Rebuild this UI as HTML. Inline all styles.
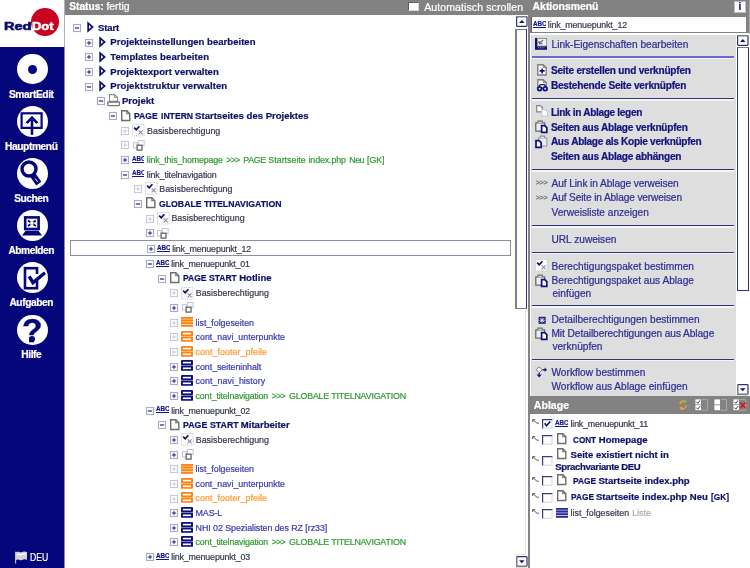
<!DOCTYPE html>
<html lang="de"><head><meta charset="utf-8"><title>RedDot CMS</title>
<style>
html,body{margin:0;padding:0;}
body{width:750px;height:568px;position:relative;overflow:hidden;background:#fff;will-change:transform;font-family:"Liberation Sans",Arial,sans-serif;}
.b{position:absolute;}
.t{position:absolute;white-space:nowrap;line-height:12px;height:12px;-webkit-text-stroke:0.22px currentColor;}
.i{position:absolute;overflow:visible;}
.abc{position:absolute;width:12.9px;height:7.1px;overflow:hidden;font-size:7.9px;line-height:7px;font-weight:bold;color:#14148a;border-bottom:1.2px solid #14148a;white-space:nowrap;}
.abc span{display:inline-block;transform:scaleX(0.8);transform-origin:0 50%;-webkit-text-stroke:0.2px #14148a;}
.circ{position:absolute;border-radius:50%;background:#fff;}
</style></head><body>


<svg width="0" height="0" style="position:absolute">
<defs>
<g id="plus"><rect x="0.5" y="0.5" width="7" height="7" fill="#fff" stroke="#acacca" stroke-width="1.1"/><path d="M1.9 4H6.1M4 1.9V6.1" stroke="#10106a" stroke-width="0.9"/></g>
<g id="minus"><rect x="0.5" y="0.5" width="7" height="7" fill="#fff" stroke="#acacca" stroke-width="1.1"/><path d="M1.9 4H6.1" stroke="#10106a" stroke-width="1.1"/></g>
<g id="plusd"><rect x="0.5" y="0.5" width="7" height="7" fill="#fff" stroke="#c6c6d8" stroke-width="1.1"/><path d="M1.7 4H6.3M4 1.7V6.3" stroke="#c8c8d8" stroke-width="0.9"/></g>
<g id="arrow"><path d="M1.15 1.2L5.6 5L1.15 8.8Z" fill="#fff" stroke="#10106a" stroke-width="1.7" stroke-linejoin="miter"/></g>
<g id="page"><path d="M0.7 0.7H5.8L8.8 3.7V10.5H0.7Z" fill="#fff" stroke="#6c6c6c" stroke-width="1.4"/><path d="M5.8 0.7V3.7H8.8" fill="none" stroke="#6c6c6c" stroke-width="1.1"/></g>
<g id="projekt"><path d="M2.5 0.6H7.5L10.5 3.4V7.4H2.5Z" fill="#fff" stroke="#8a8a8a" stroke-width="1.1"/><path d="M7.5 0.6V3.4H10.5" fill="none" stroke="#8a8a8a" stroke-width="0.9"/><rect x="0.7" y="8" width="11.8" height="3.6" rx="0.8" fill="#fff" stroke="#777" stroke-width="1.3"/></g>
<g id="check"><rect x="0.5" y="0.5" width="11.5" height="11.5" fill="#fff" stroke="#c4c4d4" stroke-width="0.9" stroke-dasharray="1.2 0.8"/><path d="M2.2 3.6L4.2 5.8L7.4 2.2" fill="none" stroke="#10106a" stroke-width="1.7"/><path d="M6.6 6.4L10.6 10.4M10.6 6.4L6.6 10.4" stroke="#8c8c9c" stroke-width="1.1"/></g>
<g id="squares"><rect x="0.5" y="2.7" width="3.9" height="5.3" fill="#fff" stroke="#c2c2d8" stroke-width="1"/><rect x="5.3" y="0.5" width="5.8" height="5.2" fill="#fff" stroke="#c2c2d8" stroke-width="1"/><rect x="4.1" y="5.2" width="4.9" height="4.9" fill="#fff" stroke="#646464" stroke-width="1.3"/></g>
<g id="listo"><rect x="0" y="0.4" width="12" height="9" fill="#ffd2a4"/><path d="M0 0.9H12M0 3.5H12M0 6.1H12M0 8.8H12" stroke="#ff8212" stroke-width="1.8"/></g>
<g id="listn"><rect x="0" y="0.4" width="12" height="9" fill="#c4c4e4"/><path d="M0 0.9H12M0 3.5H12M0 6.1H12M0 8.8H12" stroke="#2a2a9c" stroke-width="1.8"/></g>
<g id="conto"><rect x="0" y="4" width="12" height="2.6" fill="#ffc48c"/><rect x="0" y="0" width="12" height="5" rx="0.9" fill="#ff8212"/><rect x="1.9" y="1.8" width="8.1" height="1.6" fill="#fff"/><rect x="0" y="5.7" width="12" height="5.1" rx="0.9" fill="#ff8212"/><rect x="1.9" y="7.5" width="8.1" height="1.6" fill="#fff"/></g>
<g id="contn"><rect x="0" y="4" width="12" height="2.6" fill="#9c9cc8"/><rect x="0" y="0" width="12" height="5" rx="0.9" fill="#10107c"/><rect x="1.9" y="1.8" width="8.1" height="1.6" fill="#fff"/><rect x="0" y="5.7" width="12" height="5.1" rx="0.9" fill="#10107c"/><rect x="1.9" y="7.5" width="8.1" height="1.6" fill="#fff"/></g>
<g id="sbup"><rect x="0.6" y="0.6" width="10.4" height="9.8" rx="0.8" fill="#fff" stroke="#30307c" stroke-width="1.2"/><path d="M0.4 0.6H11.2" stroke="#808080" stroke-width="1.3"/><path d="M3.1 7L5.8 3.9L8.5 7Z" fill="#10106a"/></g>
<g id="sbdn"><rect x="0.6" y="0.6" width="10.4" height="9.8" rx="0.8" fill="#fff" stroke="#30307c" stroke-width="1.2"/><path d="M0.7 0.4V10.5H11" fill="none" stroke="#808080" stroke-width="1.4"/><path d="M3.1 4.2L5.8 7.3L8.5 4.2Z" fill="#10106a"/></g>
<g id="clip"><path d="M0.8 2.8H9.6V11.2H0.8Z" fill="#f0f0f0" stroke="#666" stroke-width="1.3" stroke-linejoin="round"/><path d="M3 2.8V1.1H7.2V2.8" fill="#f0f0f0" stroke="#666" stroke-width="1.1"/><path d="M6.6 5.6H9.8L11.8 7.6V12.4H6.6Z" fill="#fff" stroke="#10107c" stroke-width="1.7"/></g>
<g id="clip2"><path d="M3.4 2.8H11.8V11.2H3.4Z" fill="#ececec" stroke="#a4a4a4" stroke-width="1.2" stroke-linejoin="round"/><path d="M5.4 2.8V1.1H9.6V2.8" fill="#f4f4f4" stroke="#8a8a8a" stroke-width="1.1"/><path d="M1 5.6H4.2L6.2 7.6V12.4H1Z" fill="#fff" stroke="#10107c" stroke-width="1.7"/></g>
<g id="copy"><path d="M0.7 0.7H4.4L6.4 2.6V6.8H0.7Z" fill="#fff" stroke="#858585" stroke-width="1.2"/><path d="M5.8 4.8H9.6L11.6 6.6V11H5.8Z" fill="#fff" stroke="#c6c6dc" stroke-width="1.1"/></g>
<g id="linkprop"><rect x="0" y="0" width="12" height="11.8" fill="#10107c"/><rect x="2.5" y="0.6" width="9" height="7.4" fill="#f2f2f2" stroke="#9a9a9a" stroke-width="0.9"/><path d="M4 5.6L8 2.2M4 5.6H7.4M4 5.6V3" stroke="#666" stroke-width="1.3" fill="none"/><path d="M3 9.8H10" stroke="#c8c8e8" stroke-width="0.8" stroke-dasharray="1 0.8"/></g>
<g id="newpage"><path d="M0.8 0.8H6.2L9.2 3.6V11H0.8Z" fill="#fff" stroke="#808080" stroke-width="1.4"/><path d="M6.2 0.8V3.6H9.2" fill="none" stroke="#808080" stroke-width="1"/><path d="M2.6 6.9H7.6M5.1 4.4V9.4" stroke="#10107c" stroke-width="1.6"/></g>
<g id="bino"><path d="M0.8 0.8H6.2L9.2 3.6V9H0.8Z" fill="#fff" stroke="#808080" stroke-width="1.4"/><path d="M6.2 0.8V3.6H9.2" fill="none" stroke="#808080" stroke-width="1"/><path d="M2 7.4L3.4 5.6H7.2L8.8 7.4" fill="none" stroke="#10107c" stroke-width="1.3"/><circle cx="2.6" cy="9.8" r="1.9" fill="#dcdcf0" stroke="#10107c" stroke-width="1.7"/><circle cx="8.2" cy="9.8" r="1.9" fill="#dcdcf0" stroke="#10107c" stroke-width="1.7"/></g>
<g id="detail"><rect x="0.5" y="0.5" width="6" height="6" fill="none" stroke="#d0d0dc" stroke-width="0.8" stroke-dasharray="1 1"/><rect x="3.6" y="3.8" width="7" height="7" fill="#10107c"/><path d="M5 5.2L9.2 9.4M9.2 5.2L5 9.4" stroke="#fff" stroke-width="1"/><path d="M7.1 4.4V10.2M4.2 7.3H10" stroke="#fff" stroke-width="0.7"/></g>
<g id="workflow"><path d="M4.2 0.8L7.2 3.8L4.2 6.8L1.2 3.8Z" fill="#fff" stroke="#777" stroke-width="1"/><path d="M7.6 3.8H10" stroke="#10107c" stroke-width="1.4"/><path d="M9.6 1.6L12 3.8L9.6 6Z" fill="#10107c"/><path d="M4.2 7V8.6" stroke="#10107c" stroke-width="1.4"/><path d="M1.6 8.4H6.8L4.2 11.4Z" fill="#10107c"/></g>
<g id="ablarrow"><path d="M1 1L5 4.2H7" fill="none" stroke="#555" stroke-width="0.9"/><path d="M0.6 0.6H3.2M0.6 0.6V3" stroke="#555" stroke-width="0.9" fill="none"/></g>
<g id="cb"><rect x="0" y="0" width="10.4" height="9.6" fill="#fff"/><path d="M0.6 9.6V0.6H10.4" fill="none" stroke="#3c3c74" stroke-width="1.2"/><path d="M10 1V9.2H1" fill="none" stroke="#d4d4d4" stroke-width="1"/></g>
<g id="cbc"><rect x="0" y="0" width="10.4" height="9.6" fill="#fff"/><path d="M0.6 9.6V0.6H10.4" fill="none" stroke="#3c3c74" stroke-width="1.2"/><path d="M10 1V9.2H1" fill="none" stroke="#d4d4d4" stroke-width="1"/><path d="M2.6 4.2L4.6 6.8L8.2 2.4" fill="none" stroke="#10106a" stroke-width="1.6"/></g>
</defs>
</svg>

<div class="b" style="left:0;top:0;width:63.6px;height:47px;background:#fff"></div>
<div class="b" style="left:0;top:47px;width:64.2px;height:521px;background:#05057c"></div>
<div class="b" style="left:63.5px;top:0;width:1.2px;height:47px;background:#b0b0c4"></div>
<div class="b" style="left:64.2px;top:47px;width:1.1px;height:521px;background:#8c8c8c"></div>
<div class="b" style="left:64.7px;top:0;width:686px;height:15.3px;background:#828282"></div>
<div class="b" style="left:30.8px;top:7.5px;width:28.4px;height:28.6px;border-radius:50%;background:#c9021f"></div>
<span class="t" style="left:3.6px;top:20.6px;font-size:10.2px;font-weight:bold;color:#0a0a6e;-webkit-text-stroke:0.55px #0a0a6e;transform-origin:0 50%;transform:scaleX(1.44);letter-spacing:-0.1px">Red</span>
<span class="t" style="left:32.3px;top:20.6px;font-size:10.2px;font-weight:bold;color:#fff;-webkit-text-stroke:0.5px #fff;transform-origin:0 50%;transform:scaleX(1.28);letter-spacing:-0.1px">Dot</span>
<div class="circ" style="left:16.75px;top:53.55px;width:30.90px;height:30.90px"></div>
<span class="t" style="left:8.90px;top:88.87px;font-size:10.2px;color:#fff;font-weight:bold;letter-spacing:-0.374px;">SmartEdit</span>
<div class="circ" style="left:27.60px;top:64.90px;width:9.2px;height:9.2px;background:#05057c"></div>
<div class="circ" style="left:16.75px;top:106.05px;width:30.90px;height:30.90px"></div>
<span class="t" style="left:5.00px;top:141.07px;font-size:10.2px;color:#fff;font-weight:bold;letter-spacing:-0.388px;">Hauptmenü</span>
<svg class="i" style="left:16.200000000000003px;top:105.5px" width="32" height="32"><rect x="5.6" y="7.3" width="20" height="14.6" fill="none" stroke="#05057c" stroke-width="2.2"/><path d="M16 28.8V14" stroke="#05057c" stroke-width="2.6"/><path d="M10.6 17.2L16 11.6L21.4 17.2" fill="none" stroke="#05057c" stroke-width="2.6"/></svg>
<div class="circ" style="left:16.75px;top:157.95px;width:30.90px;height:30.90px"></div>
<span class="t" style="left:14.20px;top:193.27px;font-size:10.2px;color:#fff;font-weight:bold;letter-spacing:-0.444px;">Suchen</span>
<svg class="i" style="left:16.200000000000003px;top:157.4px" width="32" height="32"><circle cx="13" cy="12" r="7" fill="none" stroke="#05057c" stroke-width="3.4"/><path d="M17 18.4L22.8 26.6" stroke="#05057c" stroke-width="6.2"/><path d="M19.3 21.6L21.6 24.8" stroke="#fff" stroke-width="1"/></svg>
<div class="circ" style="left:16.75px;top:210.05px;width:30.90px;height:30.90px"></div>
<span class="t" style="left:8.45px;top:245.37px;font-size:10.2px;color:#fff;font-weight:bold;letter-spacing:-0.454px;">Abmelden</span>
<svg class="i" style="left:16.200000000000003px;top:209.5px" width="32" height="32"><rect x="9.2" y="7.4" width="13.4" height="11.6" fill="#fff" stroke="#05057c" stroke-width="2.6"/><path d="M12 10.4L19.8 16M19.8 10.4L12 16" stroke="#05057c" stroke-width="1.8"/><rect x="14.2" y="11.7" width="3.4" height="3" fill="#fff"/><path d="M9.6 20.8H22.4L26 25.4H6Z" fill="#05057c"/></svg>
<div class="circ" style="left:16.75px;top:262.15px;width:30.90px;height:30.90px"></div>
<span class="t" style="left:9.40px;top:297.27px;font-size:10.2px;color:#fff;font-weight:bold;letter-spacing:-0.404px;">Aufgaben</span>
<svg class="i" style="left:16.200000000000003px;top:261.6px" width="32" height="32"><rect x="9" y="6.2" width="12" height="20" fill="#fff" stroke="#05057c" stroke-width="2.6"/><rect x="19" y="12" width="5" height="6" fill="#fff"/><path d="M13.2 14.4L17 20.6L29 10.8" fill="none" stroke="#05057c" stroke-width="3.4"/></svg>
<div class="circ" style="left:16.75px;top:314.55px;width:30.90px;height:30.90px"></div>
<span class="t" style="left:21.25px;top:349.07px;font-size:10.2px;color:#fff;font-weight:bold;letter-spacing:-0.401px;">Hilfe</span>
<span class="t" style="left:0;width:64.6px;text-align:center;top:313.50px;height:34px;line-height:34px;font-size:33.5px;font-weight:bold;color:#05057c;-webkit-text-stroke:0.35px #05057c">?</span>
<div class="circ" style="left:28.70px;top:335.90px;width:6.4px;height:6.4px;background:#05057c"></div>
<svg class="i" style="left:14.6px;top:551.2px" width="13" height="13"><path d="M0.6 0.8V12.4" stroke="#c8c8c8" stroke-width="1.1"/><path d="M1 1.2C3.5 -0.4 5 2.4 7.5 0.9C9 0.1 10.5 0.5 12 1.1V8.8C10 8 8.8 8 7.5 8.8C5 10.2 3.5 7.2 1 9Z" fill="#d4d4d4"/><path d="M2.5 3.6C4 2.6 5.2 4.4 7.4 3.2C8.6 2.6 9.6 2.8 10.6 3.2" fill="none" stroke="#fff" stroke-width="1.3"/></svg>
<span class="t" style="left:29.80px;top:552.40px;font-size:10.4px;color:#fff;"><span style="display:inline-block;white-space:pre;transform:scaleX(0.8288);transform-origin:0 50%;margin-right:-3.76px">DEU</span></span>
<span class="t" style="left:69.20px;top:1.47px;font-size:10.2px;color:#fff;font-weight:bold;">Status:</span>
<span class="t" style="left:106.40px;top:1.40px;font-size:10.4px;color:#fff;">fertig</span>
<div class="b" style="left:408.4px;top:1.9px;width:10.2px;height:9.4px;background:#fff;box-sizing:border-box;border-top:1px solid #5e5e5e;border-left:1px solid #5e5e5e;border-right:1px solid #d8d8d8;border-bottom:1px solid #d8d8d8"></div>
<span class="t" style="left:424.20px;top:1.33px;font-size:10.6px;color:#fff;letter-spacing:0.062px;">Automatisch scrollen</span>
<span class="t" style="left:532.60px;top:1.40px;font-size:10.4px;color:#fff;font-weight:bold;">Aktionsmenü</span>
<div class="b" style="left:734.1px;top:1.2px;width:11.8px;height:11.4px;background:#fff;box-sizing:border-box;border:1.3px solid #bcbccc"></div>
<span class="t" style="left:738.50px;top:1.33px;font-size:10px;color:#10107c;font-weight:bold;">i</span>
<div class="b" style="left:70.4px;top:239.9px;width:440.4px;height:16.2px;box-sizing:border-box;border:1.1px solid #8e8e9e;background:#fff"></div>
<svg class="i" style="left:72.75px;top:24.10px" width="8" height="8"><use href="#minus"/></svg>
<svg class="i" style="left:86.70px;top:22.40px" width="8" height="10"><use href="#arrow"/></svg>
<span class="t" style="left:98.10px;top:21.79px;font-size:9.55px;color:#10106a;font-weight:bold;letter-spacing:-0.191px;">Start</span>
<svg class="i" style="left:84.92px;top:38.75px" width="8" height="8"><use href="#plus"/></svg>
<svg class="i" style="left:98.87px;top:37.05px" width="8" height="10"><use href="#arrow"/></svg>
<span class="t" style="left:110.27px;top:36.44px;font-size:9.55px;color:#10106a;font-weight:bold;letter-spacing:0.014px;">Projekteinstellungen bearbeiten</span>
<svg class="i" style="left:84.92px;top:53.40px" width="8" height="8"><use href="#plus"/></svg>
<svg class="i" style="left:98.87px;top:51.70px" width="8" height="10"><use href="#arrow"/></svg>
<span class="t" style="left:110.27px;top:51.09px;font-size:9.55px;color:#10106a;font-weight:bold;letter-spacing:0.068px;">Templates bearbeiten</span>
<svg class="i" style="left:84.92px;top:68.05px" width="8" height="8"><use href="#plus"/></svg>
<svg class="i" style="left:98.87px;top:66.35px" width="8" height="10"><use href="#arrow"/></svg>
<span class="t" style="left:110.27px;top:65.74px;font-size:9.55px;color:#10106a;font-weight:bold;letter-spacing:0.010px;">Projektexport verwalten</span>
<svg class="i" style="left:84.92px;top:82.70px" width="8" height="8"><use href="#minus"/></svg>
<svg class="i" style="left:98.87px;top:81.00px" width="8" height="10"><use href="#arrow"/></svg>
<span class="t" style="left:110.27px;top:80.39px;font-size:9.55px;color:#10106a;font-weight:bold;letter-spacing:0.071px;">Projektstruktur verwalten</span>
<svg class="i" style="left:97.08px;top:97.35px" width="8" height="8"><use href="#minus"/></svg>
<svg class="i" style="left:107.23px;top:94.25px" width="13" height="12"><use href="#projekt"/></svg>
<span class="t" style="left:122.03px;top:95.04px;font-size:9.55px;color:#10106a;font-weight:bold;letter-spacing:-0.027px;">Projekt</span>
<svg class="i" style="left:109.24px;top:112.00px" width="8" height="8"><use href="#minus"/></svg>
<svg class="i" style="left:121.19px;top:109.50px" width="10" height="11.5"><use href="#page"/></svg>
<span class="t" style="left:134.39px;top:109.69px;font-size:9.55px;color:#10106a;font-weight:bold;"><span style="display:inline-block;white-space:pre;transform:scaleX(0.9031);transform-origin:0 50%;margin-right:-2.81px">PAGE </span><span style="display:inline-block;white-space:pre;transform:scaleX(0.9031);transform-origin:0 50%;margin-right:-3.70px">INTERN </span>Startseites des Projektes</span>
<svg class="i" style="left:121.41px;top:126.65px" width="8" height="8"><use href="#plusd"/></svg>
<svg class="i" style="left:132.36px;top:123.75px" width="12.5" height="12.5"><use href="#check"/></svg>
<span class="t" style="left:147.06px;top:124.58px;font-size:8.85px;color:#3a3a52;letter-spacing:0.029px;">Basisberechtigung</span>
<svg class="i" style="left:121.41px;top:141.30px" width="8" height="8"><use href="#plusd"/></svg>
<svg class="i" style="left:132.86px;top:139.60px" width="12" height="11"><use href="#squares"/></svg>
<svg class="i" style="left:121.41px;top:155.95px" width="8" height="8"><use href="#plus"/></svg>
<span class="abc" style="left:131.56px;top:154.70px"><span>ABC</span></span>
<span class="t" style="left:146.86px;top:153.88px;font-size:8.85px;color:#309c30;letter-spacing:-0.150px;">link_this_homepage</span>
<span class="t" style="left:226.36px;top:153.88px;font-size:8.85px;color:#309c30;letter-spacing:-0.802px;">&gt;&gt;&gt;</span>
<span class="t" style="left:243.26px;top:153.88px;font-size:8.85px;color:#309c30;letter-spacing:-0.353px;">PAGE</span>
<span class="t" style="left:268.36px;top:153.88px;font-size:8.85px;color:#309c30;letter-spacing:0.002px;">Startseite</span>
<span class="t" style="left:308.46px;top:153.88px;font-size:8.85px;color:#309c30;letter-spacing:-0.104px;">index.php</span>
<span class="t" style="left:349.36px;top:153.88px;font-size:8.85px;color:#309c30;letter-spacing:-0.614px;">Neu</span>
<span class="t" style="left:367.06px;top:153.88px;font-size:8.85px;color:#309c30;letter-spacing:-0.087px;">[GK]</span>
<svg class="i" style="left:121.41px;top:170.60px" width="8" height="8"><use href="#minus"/></svg>
<span class="abc" style="left:131.56px;top:169.35px"><span>ABC</span></span>
<span class="t" style="left:146.86px;top:168.53px;font-size:8.85px;color:#3a3a52;letter-spacing:-0.124px;">link_titelnavigation</span>
<svg class="i" style="left:133.57px;top:185.25px" width="8" height="8"><use href="#plusd"/></svg>
<svg class="i" style="left:144.53px;top:182.35px" width="12.5" height="12.5"><use href="#check"/></svg>
<span class="t" style="left:159.22px;top:183.18px;font-size:8.85px;color:#3a3a52;letter-spacing:0.029px;">Basisberechtigung</span>
<svg class="i" style="left:133.57px;top:199.90px" width="8" height="8"><use href="#minus"/></svg>
<svg class="i" style="left:145.53px;top:197.40px" width="10" height="11.5"><use href="#page"/></svg>
<span class="t" style="left:158.72px;top:197.59px;font-size:9.55px;color:#10106a;font-weight:bold;"><span style="display:inline-block;white-space:pre;transform:scaleX(0.9122);transform-origin:0 50%;margin-right:-4.33px">GLOBALE </span><span style="display:inline-block;white-space:pre;transform:scaleX(0.9122);transform-origin:0 50%;margin-right:-7.47px">TITELNAVIGATION</span></span>
<svg class="i" style="left:145.74px;top:214.55px" width="8" height="8"><use href="#plusd"/></svg>
<svg class="i" style="left:156.69px;top:211.65px" width="12.5" height="12.5"><use href="#check"/></svg>
<span class="t" style="left:171.39px;top:212.48px;font-size:8.85px;color:#3a3a52;letter-spacing:0.029px;">Basisberechtigung</span>
<svg class="i" style="left:145.74px;top:229.20px" width="8" height="8"><use href="#plus"/></svg>
<svg class="i" style="left:157.19px;top:227.50px" width="12" height="11"><use href="#squares"/></svg>
<svg class="i" style="left:146.74px;top:244.75px" width="8" height="8"><use href="#plus"/></svg>
<span class="abc" style="left:156.89px;top:243.50px"><span>ABC</span></span>
<span class="t" style="left:172.19px;top:242.68px;font-size:8.85px;color:#3a3a52;letter-spacing:-0.153px;">link_menuepunkt_12</span>
<svg class="i" style="left:145.74px;top:260.10px" width="8" height="8"><use href="#minus"/></svg>
<span class="abc" style="left:155.89px;top:258.85px"><span>ABC</span></span>
<span class="t" style="left:171.19px;top:258.03px;font-size:8.85px;color:#3a3a52;letter-spacing:-0.176px;">link_menuepunkt_01</span>
<svg class="i" style="left:157.90px;top:274.75px" width="8" height="8"><use href="#minus"/></svg>
<svg class="i" style="left:169.85px;top:272.25px" width="10" height="11.5"><use href="#page"/></svg>
<span class="t" style="left:183.05px;top:272.44px;font-size:9.55px;color:#10106a;font-weight:bold;"><span style="display:inline-block;white-space:pre;transform:scaleX(0.8941);transform-origin:0 50%;margin-right:-3.07px">PAGE </span><span style="display:inline-block;white-space:pre;transform:scaleX(0.8941);transform-origin:0 50%;margin-right:-3.58px">START </span>Hotline</span>
<svg class="i" style="left:170.07px;top:289.40px" width="8" height="8"><use href="#plusd"/></svg>
<svg class="i" style="left:181.02px;top:286.50px" width="12.5" height="12.5"><use href="#check"/></svg>
<span class="t" style="left:195.72px;top:287.33px;font-size:8.85px;color:#3a3a52;letter-spacing:0.029px;">Basisberechtigung</span>
<svg class="i" style="left:170.07px;top:304.05px" width="8" height="8"><use href="#plus"/></svg>
<svg class="i" style="left:181.52px;top:302.35px" width="12" height="11"><use href="#squares"/></svg>
<svg class="i" style="left:170.07px;top:318.70px" width="8" height="8"><use href="#plusd"/></svg>
<svg class="i" style="left:181.22px;top:317.10px" width="12" height="11"><use href="#listo"/></svg>
<span class="t" style="left:195.62px;top:316.63px;font-size:8.85px;color:#3c3cb0;letter-spacing:-0.009px;">list_folgeseiten</span>
<svg class="i" style="left:170.07px;top:333.35px" width="8" height="8"><use href="#plusd"/></svg>
<svg class="i" style="left:181.22px;top:331.15px" width="12" height="11"><use href="#conto"/></svg>
<span class="t" style="left:195.62px;top:331.28px;font-size:8.85px;color:#3c3cb0;letter-spacing:-0.003px;">cont_navi_unterpunkte</span>
<svg class="i" style="left:170.07px;top:348.00px" width="8" height="8"><use href="#plusd"/></svg>
<svg class="i" style="left:181.22px;top:345.80px" width="12" height="11"><use href="#conto"/></svg>
<span class="t" style="left:195.62px;top:345.93px;font-size:8.85px;color:#ff9a30;letter-spacing:0.065px;">cont_footer_pfeile</span>
<svg class="i" style="left:170.07px;top:362.65px" width="8" height="8"><use href="#plus"/></svg>
<svg class="i" style="left:181.22px;top:360.45px" width="12" height="11"><use href="#contn"/></svg>
<span class="t" style="left:195.62px;top:360.58px;font-size:8.85px;color:#3c3cb0;letter-spacing:-0.050px;">cont_seiteninhalt</span>
<svg class="i" style="left:170.07px;top:377.30px" width="8" height="8"><use href="#plus"/></svg>
<svg class="i" style="left:181.22px;top:375.10px" width="12" height="11"><use href="#contn"/></svg>
<span class="t" style="left:195.62px;top:375.23px;font-size:8.85px;color:#3c3cb0;letter-spacing:0.050px;">cont_navi_history</span>
<svg class="i" style="left:170.07px;top:391.95px" width="8" height="8"><use href="#plus"/></svg>
<svg class="i" style="left:181.22px;top:389.75px" width="12" height="11"><use href="#contn"/></svg>
<span class="t" style="left:195.62px;top:389.88px;font-size:8.85px;color:#309c30;letter-spacing:-0.163px;">cont_titelnavigation</span>
<span class="t" style="left:271.82px;top:389.88px;font-size:8.85px;color:#309c30;letter-spacing:-0.802px;">&gt;&gt;&gt;</span>
<span class="t" style="left:289.02px;top:389.88px;font-size:8.85px;color:#309c30;letter-spacing:-0.177px;">GLOBALE TITELNAVIGATION</span>
<svg class="i" style="left:145.74px;top:406.60px" width="8" height="8"><use href="#minus"/></svg>
<span class="abc" style="left:155.89px;top:405.35px"><span>ABC</span></span>
<span class="t" style="left:171.19px;top:404.53px;font-size:8.85px;color:#3a3a52;letter-spacing:-0.153px;">link_menuepunkt_02</span>
<svg class="i" style="left:157.90px;top:421.25px" width="8" height="8"><use href="#minus"/></svg>
<svg class="i" style="left:169.85px;top:418.75px" width="10" height="11.5"><use href="#page"/></svg>
<span class="t" style="left:183.05px;top:418.94px;font-size:9.55px;color:#10106a;font-weight:bold;"><span style="display:inline-block;white-space:pre;transform:scaleX(0.9202);transform-origin:0 50%;margin-right:-2.31px">PAGE </span><span style="display:inline-block;white-space:pre;transform:scaleX(0.9202);transform-origin:0 50%;margin-right:-2.69px">START </span>Mitarbeiter</span>
<svg class="i" style="left:170.07px;top:435.90px" width="8" height="8"><use href="#plus"/></svg>
<svg class="i" style="left:181.02px;top:433.00px" width="12.5" height="12.5"><use href="#check"/></svg>
<span class="t" style="left:195.72px;top:433.83px;font-size:8.85px;color:#3a3a52;letter-spacing:0.029px;">Basisberechtigung</span>
<svg class="i" style="left:170.07px;top:450.55px" width="8" height="8"><use href="#plus"/></svg>
<svg class="i" style="left:181.52px;top:448.85px" width="12" height="11"><use href="#squares"/></svg>
<svg class="i" style="left:170.07px;top:465.20px" width="8" height="8"><use href="#plusd"/></svg>
<svg class="i" style="left:181.22px;top:463.60px" width="12" height="11"><use href="#listo"/></svg>
<span class="t" style="left:195.62px;top:463.13px;font-size:8.85px;color:#3c3cb0;letter-spacing:-0.009px;">list_folgeseiten</span>
<svg class="i" style="left:170.07px;top:479.85px" width="8" height="8"><use href="#plusd"/></svg>
<svg class="i" style="left:181.22px;top:477.65px" width="12" height="11"><use href="#conto"/></svg>
<span class="t" style="left:195.62px;top:477.78px;font-size:8.85px;color:#3c3cb0;letter-spacing:-0.003px;">cont_navi_unterpunkte</span>
<svg class="i" style="left:170.07px;top:494.50px" width="8" height="8"><use href="#plusd"/></svg>
<svg class="i" style="left:181.22px;top:492.30px" width="12" height="11"><use href="#conto"/></svg>
<span class="t" style="left:195.62px;top:492.43px;font-size:8.85px;color:#ff9a30;letter-spacing:0.065px;">cont_footer_pfeile</span>
<svg class="i" style="left:170.07px;top:509.15px" width="8" height="8"><use href="#plus"/></svg>
<svg class="i" style="left:181.22px;top:506.95px" width="12" height="11"><use href="#contn"/></svg>
<span class="t" style="left:195.62px;top:507.08px;font-size:8.85px;color:#3c3cb0;letter-spacing:-0.122px;">MAS-L</span>
<svg class="i" style="left:170.07px;top:523.80px" width="8" height="8"><use href="#plus"/></svg>
<svg class="i" style="left:181.22px;top:521.60px" width="12" height="11"><use href="#contn"/></svg>
<span class="t" style="left:195.62px;top:521.73px;font-size:8.85px;color:#3c3cb0;letter-spacing:-0.049px;">NHI 02 Spezialisten des RZ [rz33]</span>
<svg class="i" style="left:170.07px;top:538.45px" width="8" height="8"><use href="#plus"/></svg>
<svg class="i" style="left:181.22px;top:536.25px" width="12" height="11"><use href="#contn"/></svg>
<span class="t" style="left:195.62px;top:536.38px;font-size:8.85px;color:#309c30;letter-spacing:-0.163px;">cont_titelnavigation</span>
<span class="t" style="left:271.82px;top:536.38px;font-size:8.85px;color:#309c30;letter-spacing:-0.802px;">&gt;&gt;&gt;</span>
<span class="t" style="left:289.02px;top:536.38px;font-size:8.85px;color:#309c30;letter-spacing:-0.177px;">GLOBALE TITELNAVIGATION</span>
<svg class="i" style="left:145.74px;top:553.10px" width="8" height="8"><use href="#plus"/></svg>
<span class="abc" style="left:155.89px;top:551.85px"><span>ABC</span></span>
<span class="t" style="left:171.19px;top:551.03px;font-size:8.85px;color:#3a3a52;letter-spacing:-0.153px;">link_menuepunkt_03</span>
<svg class="i" style="left:145.74px;top:567.75px" width="8" height="8"><use href="#plus"/></svg>
<span class="abc" style="left:155.89px;top:566.50px"><span>ABC</span></span>
<span class="t" style="left:171.19px;top:565.68px;font-size:8.85px;color:#3a3a52;letter-spacing:-0.153px;">link_menuepunkt_04</span>
<div class="b" style="left:515px;top:15.3px;width:13px;height:553px;background:#fff"></div>
<svg class="i" style="left:515.50px;top:16.40px" width="12" height="11.5"><use href="#sbup"/></svg>
<div class="b" style="left:515.2px;top:29.4px;width:11.9px;height:279.2px;box-sizing:border-box;border-left:2px solid #808080;border-top:1.4px solid #808080;border-bottom:1.7px solid #808080;border-right:1.2px solid #30307c;background:#fff"></div>
<div class="b" style="left:516.4px;top:310px;width:10px;height:245px;box-sizing:border-box;border-right:1px solid #e4e4e4;border-bottom:1px solid #e4e4e4"></div>
<svg class="i" style="left:515.50px;top:556.40px" width="12" height="11.5"><use href="#sbdn"/></svg>
<div class="b" style="left:527.9px;top:15.3px;width:1.8px;height:553px;background:#838383"></div>
<div class="b" style="left:527.9px;top:15.3px;width:222.1px;height:18.2px;background:#828282"></div>
<div class="b" style="left:749px;top:0;width:1px;height:33.5px;background:#a8a8a8"></div>
<div class="b" style="left:530.9px;top:17.1px;width:215.3px;height:15px;box-sizing:border-box;background:#fff;border-left:1px solid #5e5e5e"></div>
<span class="abc" style="left:532.90px;top:20.35px"><span>ABC</span></span>
<span class="t" style="left:547.80px;top:19.13px;font-size:8.85px;color:#3a3a52;letter-spacing:-0.136px;">link_menuepunkt_12</span>
<div class="b" style="left:529.7px;top:33.5px;width:220.3px;height:362.7px;background:#fff"></div>
<div class="b" style="left:531.3px;top:34.6px;width:204.6px;height:361.6px;background:#dedede"></div>
<svg class="i" style="left:737.00px;top:34.50px" width="12" height="11.5"><use href="#sbup"/></svg>
<div class="b" style="left:737.1px;top:47.3px;width:11.8px;height:244px;box-sizing:border-box;border-left:1.3px solid #30307c;border-top:1.4px solid #808080;border-bottom:1.4px solid #30307c;border-right:1.3px solid #30307c;background:#fff"></div>
<svg class="i" style="left:737.00px;top:384.20px" width="12" height="11.5"><use href="#sbdn"/></svg>
<span class="t" style="left:551.50px;top:39.28px;font-size:10.15px;color:#2e2e96;">Link-Eigenschaften bearbeiten</span>
<svg class="i" style="left:535.30px;top:38.30px" width="13" height="13"><use href="#linkprop"/></svg>
<div class="b" style="left:532px;top:55.70px;width:202px;height:2.2px;background:#6c6cc8"></div>
<div class="b" style="left:532px;top:57.90px;width:202px;height:1.5px;background:#f4f4f4"></div>
<span class="t" style="left:550.90px;top:65.40px;font-size:10.1px;color:#14147e;font-weight:bold;letter-spacing:-0.239px;">Seite erstellen und verknüpfen</span>
<svg class="i" style="left:537.10px;top:64.30px" width="13" height="13"><use href="#newpage"/></svg>
<span class="t" style="left:550.90px;top:79.90px;font-size:10.1px;color:#14147e;font-weight:bold;letter-spacing:-0.228px;">Bestehende Seite verknüpfen</span>
<svg class="i" style="left:537.10px;top:78.80px" width="13" height="13"><use href="#bino"/></svg>
<div class="b" style="left:532px;top:97.80px;width:202px;height:1.2px;background:#34347e"></div>
<div class="b" style="left:532px;top:99.00px;width:202px;height:1.5px;background:#f4f4f4"></div>
<span class="t" style="left:550.90px;top:106.90px;font-size:10.1px;color:#14147e;font-weight:bold;letter-spacing:-0.330px;">Link in Ablage legen</span>
<svg class="i" style="left:536.20px;top:105.10px" width="13" height="13"><use href="#copy"/></svg>
<span class="t" style="left:550.90px;top:121.60px;font-size:10.1px;color:#14147e;font-weight:bold;letter-spacing:-0.254px;">Seiten aus Ablage verknüpfen</span>
<svg class="i" style="left:535.30px;top:119.90px" width="13" height="13"><use href="#clip"/></svg>
<span class="t" style="left:550.90px;top:136.20px;font-size:10.1px;color:#14147e;font-weight:bold;letter-spacing:-0.306px;">Aus Ablage als Kopie verknüpfen</span>
<svg class="i" style="left:535.30px;top:134.50px" width="13" height="13"><use href="#clip2"/></svg>
<span class="t" style="left:550.90px;top:151.00px;font-size:10.1px;color:#14147e;font-weight:bold;letter-spacing:-0.260px;">Seiten aus Ablage abhängen</span>
<div class="b" style="left:532px;top:169.10px;width:202px;height:1.2px;background:#34347e"></div>
<div class="b" style="left:532px;top:170.30px;width:202px;height:1.5px;background:#f4f4f4"></div>
<span class="t" style="left:551.50px;top:177.68px;font-size:10.15px;color:#2e2e96;letter-spacing:-0.086px;">Auf Link in Ablage verweisen</span>
<span class="t" style="left:535.80px;top:177.31px;font-size:7.2px;color:#6a6a7a;letter-spacing:-0.4px;">&gt;&gt;&gt;</span>
<span class="t" style="left:551.50px;top:192.28px;font-size:10.15px;color:#2e2e96;letter-spacing:-0.123px;">Auf Seite in Ablage verweisen</span>
<span class="t" style="left:535.80px;top:191.91px;font-size:7.2px;color:#6a6a7a;letter-spacing:-0.4px;">&gt;&gt;&gt;</span>
<span class="t" style="left:551.50px;top:206.88px;font-size:10.15px;color:#2e2e96;">Verweisliste anzeigen</span>
<div class="b" style="left:532px;top:224.80px;width:202px;height:1.2px;background:#34347e"></div>
<div class="b" style="left:532px;top:226.00px;width:202px;height:1.5px;background:#f4f4f4"></div>
<span class="t" style="left:551.50px;top:233.68px;font-size:10.15px;color:#2e2e96;">URL zuweisen</span>
<div class="b" style="left:532px;top:251.60px;width:202px;height:1.2px;background:#34347e"></div>
<div class="b" style="left:532px;top:252.80px;width:202px;height:1.5px;background:#f4f4f4"></div>
<span class="t" style="left:551.50px;top:260.58px;font-size:10.15px;color:#2e2e96;letter-spacing:0.022px;">Berechtigungspaket bestimmen</span>
<svg class="i" style="left:535.30px;top:259.00px" width="13" height="13"><use href="#check"/></svg>
<span class="t" style="left:551.50px;top:275.38px;font-size:10.15px;color:#2e2e96;">Berechtigungspaket aus Ablage</span>
<svg class="i" style="left:535.30px;top:273.70px" width="13" height="13"><use href="#clip"/></svg>
<span class="t" style="left:552.40px;top:287.88px;font-size:10.15px;color:#2e2e96;">einfügen</span>
<div class="b" style="left:532px;top:304.90px;width:202px;height:1.2px;background:#34347e"></div>
<div class="b" style="left:532px;top:306.10px;width:202px;height:1.5px;background:#f4f4f4"></div>
<span class="t" style="left:551.50px;top:313.68px;font-size:10.15px;color:#2e2e96;">Detailberechtigungen bestimmen</span>
<svg class="i" style="left:535.30px;top:312.70px" width="13" height="13"><use href="#detail"/></svg>
<span class="t" style="left:551.50px;top:328.18px;font-size:10.15px;color:#2e2e96;letter-spacing:-0.062px;">Mit Detailberechtigungen aus Ablage</span>
<svg class="i" style="left:535.30px;top:326.50px" width="13" height="13"><use href="#clip"/></svg>
<span class="t" style="left:552.40px;top:340.78px;font-size:10.15px;color:#2e2e96;">verknüpfen</span>
<div class="b" style="left:532px;top:358.60px;width:202px;height:1.2px;background:#34347e"></div>
<div class="b" style="left:532px;top:359.80px;width:202px;height:1.5px;background:#f4f4f4"></div>
<span class="t" style="left:551.50px;top:366.68px;font-size:10.15px;color:#2e2e96;">Workflow bestimmen</span>
<svg class="i" style="left:535.30px;top:365.70px" width="13" height="13"><use href="#workflow"/></svg>
<span class="t" style="left:551.50px;top:381.48px;font-size:10.15px;color:#2e2e96;">Workflow aus Ablage einfügen</span>
<div class="b" style="left:527.9px;top:396px;width:222.1px;height:17.7px;background:#828282"></div>
<span class="t" style="left:533.80px;top:399.13px;font-size:10.6px;color:#fff;font-weight:bold;">Ablage</span>
<svg class="i" style="left:677.6px;top:398.8px" width="10" height="12"><path d="M2 5.4A3.2 3.2 0 0 1 7 2.6" fill="none" stroke="#f0a030" stroke-width="1.6"/><path d="M6 0.4L9 3L5.6 4.6Z" fill="#8cb84c"/><path d="M8 6.4A3.2 3.2 0 0 1 3 9.2" fill="none" stroke="#f0a030" stroke-width="1.6"/><path d="M4 11.4L1 8.8L4.4 7.2Z" fill="#f0a030"/></svg>
<svg class="i" style="left:695.2px;top:398.8px" width="14" height="12"><path d="M7 0.6H12.6V11.2H6.4" fill="none" stroke="#b4b4b4" stroke-width="0.8"/><rect x="0.4" y="0.4" width="5.6" height="5" fill="#fff"/><path d="M1.4 2.8L2.8 4.4L5 1.4" fill="none" stroke="#333" stroke-width="0.9"/><rect x="0.4" y="6.2" width="5.6" height="5" fill="#fff"/><path d="M1.4 8.6L2.8 10.2L5 7.2" fill="none" stroke="#333" stroke-width="0.9"/></svg>
<svg class="i" style="left:714.4px;top:398.8px" width="14" height="12"><path d="M7 0.6H12.6V11.2H6.4" fill="none" stroke="#b4b4b4" stroke-width="0.8"/><rect x="0.4" y="0.4" width="5.6" height="5" fill="#fff"/><rect x="0.4" y="6.2" width="5.6" height="5" fill="#fff"/></svg>
<svg class="i" style="left:733.0px;top:398.8px" width="14" height="12"><path d="M7 0.6H12.6V11.2H6.4" fill="none" stroke="#b4b4b4" stroke-width="0.8"/><rect x="0.4" y="0.4" width="5.6" height="5" fill="#fff"/><path d="M1.4 2.8L2.8 4.4L5 1.4" fill="none" stroke="#333" stroke-width="0.9"/><rect x="0.4" y="6.2" width="5.6" height="5" fill="#fff"/><path d="M1.4 8.6L2.8 10.2L5 7.2" fill="none" stroke="#333" stroke-width="0.9"/><path d="M7.4 3.6L12.4 9M12.4 3.6L7.4 9" stroke="#e01010" stroke-width="1.6"/></svg>
<svg class="i" style="left:532.00px;top:418.80px" width="8" height="6"><use href="#ablarrow"/></svg>
<svg class="i" style="left:542.40px;top:418.50px" width="10.4" height="9.6"><use href="#cbc"/></svg>
<span class="abc" style="left:555.40px;top:418.95px"><span>ABC</span></span>
<span class="t" style="left:570.60px;top:417.73px;font-size:8.85px;color:#3a3a52;letter-spacing:-0.196px;">link_menuepunkt_11</span>
<svg class="i" style="left:532.00px;top:435.50px" width="8" height="6"><use href="#ablarrow"/></svg>
<svg class="i" style="left:542.40px;top:435.20px" width="10.4" height="9.6"><use href="#cb"/></svg>
<svg class="i" style="left:557.30px;top:433.40px" width="10" height="11.5"><use href="#page"/></svg>
<span class="t" style="left:573.40px;top:433.99px;font-size:9.55px;color:#10106a;font-weight:bold;"><span style="display:inline-block;white-space:pre;transform:scaleX(0.8542);transform-origin:0 50%;margin-right:-4.33px">CONT </span>Homepage</span>
<svg class="i" style="left:532.00px;top:456.20px" width="8" height="6"><use href="#ablarrow"/></svg>
<svg class="i" style="left:542.40px;top:455.90px" width="10.4" height="9.6"><use href="#cb"/></svg>
<svg class="i" style="left:557.30px;top:448.20px" width="10" height="11.5"><use href="#page"/></svg>
<span class="t" style="left:570.60px;top:448.99px;font-size:9.55px;color:#10106a;font-weight:bold;letter-spacing:-0.022px;">Seite existiert nicht in</span>
<span class="t" style="left:555.30px;top:460.69px;font-size:9.55px;color:#10106a;font-weight:bold;letter-spacing:-0.373px;">Sprachvariante DEU</span>
<svg class="i" style="left:532.00px;top:476.60px" width="8" height="6"><use href="#ablarrow"/></svg>
<svg class="i" style="left:542.40px;top:476.30px" width="10.4" height="9.6"><use href="#cb"/></svg>
<svg class="i" style="left:557.30px;top:474.30px" width="10" height="11.5"><use href="#page"/></svg>
<span class="t" style="left:572.90px;top:474.69px;font-size:9.55px;color:#10106a;font-weight:bold;"><span style="display:inline-block;white-space:pre;transform:scaleX(0.8798);transform-origin:0 50%;margin-right:-3.49px">PAGE </span>Startseite index.php</span>
<svg class="i" style="left:532.00px;top:492.90px" width="8" height="6"><use href="#ablarrow"/></svg>
<svg class="i" style="left:542.40px;top:492.60px" width="10.4" height="9.6"><use href="#cb"/></svg>
<svg class="i" style="left:557.30px;top:490.30px" width="10" height="11.5"><use href="#page"/></svg>
<span class="t" style="left:570.60px;top:490.99px;font-size:9.55px;color:#10106a;font-weight:bold;"><span style="display:inline-block;white-space:pre;transform:scaleX(0.8728);transform-origin:0 50%;margin-right:-3.69px">PAGE </span>Startseite index.php Neu <span style="display:inline-block;white-space:pre;transform:scaleX(0.8728);transform-origin:0 50%;margin-right:-2.63px">[GK]</span></span>
<svg class="i" style="left:532.00px;top:509.00px" width="8" height="6"><use href="#ablarrow"/></svg>
<svg class="i" style="left:542.40px;top:508.70px" width="10.4" height="9.6"><use href="#cb"/></svg>
<svg class="i" style="left:556.00px;top:507.60px" width="12" height="10"><use href="#listn"/></svg>
<span class="t" style="left:570.60px;top:507.43px;font-size:8.85px;color:#3a3a52;">list_folgeseiten</span>
<span class="t" style="left:632.20px;top:507.43px;font-size:8.85px;color:#a8a8a8;">Liste</span>
</body></html>
